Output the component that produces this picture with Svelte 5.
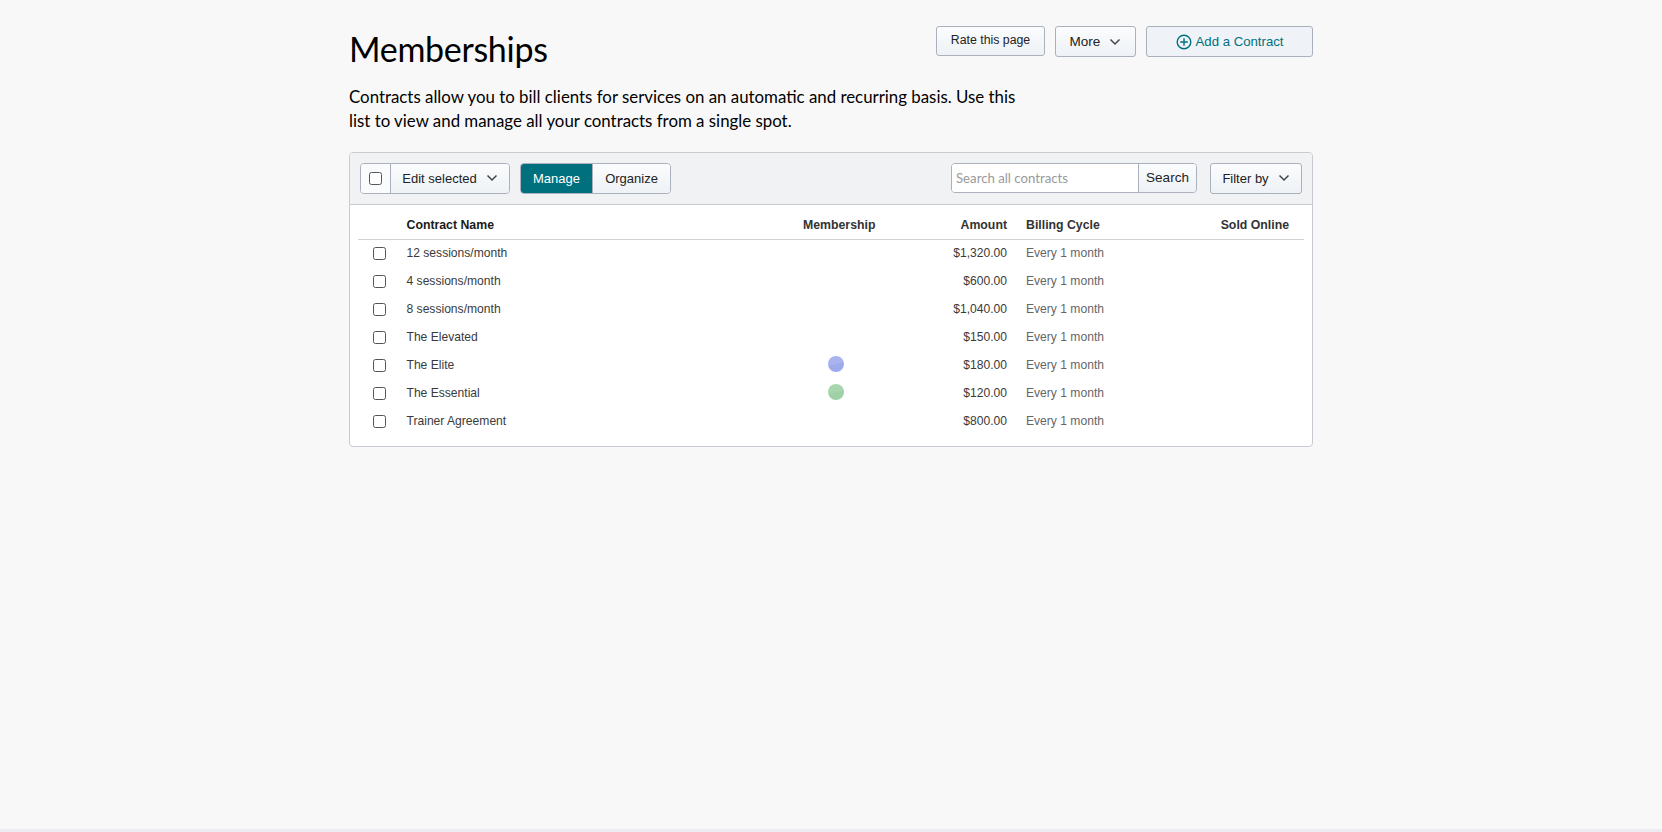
<script lang="ts">
	const contracts = [
		{ name: '12 sessions/month', amount: '$1,320.00', dot: null },
		{ name: '4 sessions/month', amount: '$600.00', dot: null },
		{ name: '8 sessions/month', amount: '$1,040.00', dot: null },
		{ name: 'The Elevated', amount: '$150.00', dot: null },
		{ name: 'The Elite', amount: '$180.00', dot: 'blue' },
		{ name: 'The Essential', amount: '$120.00', dot: 'green' },
		{ name: 'Trainer Agreement', amount: '$800.00', dot: null },
	];
</script>

{#snippet chevron()}
	<svg class="chevron" width="12" height="8" viewBox="0 0 12 8" fill="none" stroke="currentColor" stroke-width="1.5">
		<polyline points="1.5,1.5 6,6 10.5,1.5" />
	</svg>
{/snippet}

<div class="page">
	<main class="content">
		<header class="page-header">
			<div class="intro">
				<h1>Memberships</h1>
				<p>Contracts allow you to bill clients for services on an automatic and recurring basis. Use this list to view and manage all your contracts from a single spot.</p>
			</div>
			<div class="page-actions">
				<button class="btn btn-rate">Rate this page</button>
				<button class="btn btn-more">More {@render chevron()}</button>
				<button class="btn btn-add">
					<svg width="16" height="16" viewBox="0 0 16 16" fill="none" stroke="currentColor" stroke-width="1.4">
						<circle cx="8" cy="8" r="6.8" />
						<path d="M8 4.2v7.6M4.2 8h7.6" />
					</svg>
					Add a Contract
				</button>
			</div>
		</header>

		<section class="panel">
			<div class="toolbar">
				<div class="group group-edit">
					<span class="check-cell"><input type="checkbox" /></span>
					<button class="btn seg">Edit selected {@render chevron()}</button>
				</div>
				<div class="group group-view">
					<button class="btn seg seg-active">Manage</button>
					<button class="btn seg">Organize</button>
				</div>
				<div class="search">
					<input type="text" placeholder="Search all contracts" />
					<button class="btn seg">Search</button>
				</div>
				<button class="btn btn-filter">Filter by {@render chevron()}</button>
			</div>

			<table>
				<thead>
					<tr>
						<th class="col-check"></th>
						<th class="col-name">Contract Name</th>
						<th class="col-membership">Membership</th>
						<th class="col-amount">Amount</th>
						<th class="col-cycle">Billing Cycle</th>
						<th class="col-sold">Sold Online</th>
					</tr>
				</thead>
				<tbody>
					{#each contracts as c}
						<tr>
							<td class="col-check"><input type="checkbox" /></td>
							<td class="col-name">{c.name}</td>
							<td class="col-membership">
								{#if c.dot}<span class="dot dot-{c.dot}"></span>{/if}
							</td>
							<td class="col-amount">{c.amount}</td>
							<td class="col-cycle">Every 1 month</td>
							<td class="col-sold"></td>
						</tr>
					{/each}
				</tbody>
			</table>
		</section>
	</main>
	<div class="footer-strip"></div>
</div>

<style>
	:global(body) {
		background: #f8f8f8;
		font-family: "Liberation Sans", Arial, sans-serif;
		color: #333;
	}

	.page {
		min-height: 100vh;
		display: flex;
		flex-direction: column;
	}

	.content {
		width: 964px;
		margin: 0 auto;
		padding-top: 26px;
		flex: 1;
	}

	.footer-strip {
		height: 3px;
		background: #ebedf0;
	}

	/* Header */
	.page-header {
		display: flex;
		justify-content: space-between;
		align-items: flex-start;
		height: 126px;
	}

	.intro {
		width: 680px;
		flex-shrink: 0;
		margin-right: -100px;
	}

	h1 {
		font-family: Lato, sans-serif;
		font-size: 34px;
		font-weight: 400;
		letter-spacing: -0.3px;
		line-height: 46px;
		color: #000;
		margin: 0 0 13px;
	}

	.intro p {
		font-family: Lato, sans-serif;
		font-size: 16.85px;
		line-height: 24px;
		color: #000;
		margin: 0;
	}

	.page-actions {
		display: flex;
		gap: 10px;
		align-items: flex-start;
	}

	/* Buttons */
	.btn {
		font-family: "Liberation Sans", Arial, sans-serif;
		font-size: 13px;
		color: #222;
		height: 31px;
		padding: 0 12px;
		border: 1px solid #aab1bc;
		border-radius: 3px;
		background: linear-gradient(#fbfcfd, #eef2f6);
		display: inline-flex;
		align-items: center;
		justify-content: center;
		gap: 8px;
		box-sizing: border-box;
		white-space: nowrap;
	}

	.chevron { color: #444; margin-left: 1px; }

	.btn-rate { width: 109px; height: 30px; font-size: 12.3px; padding-bottom: 2px; }
	.btn-more { width: 81px; font-size: 13.5px; }

	.btn-add {
		width: 167px;
		background: #eff3f7;
		color: #00707f;
		font-size: 13.2px;
		gap: 4px;
	}

	/* Panel */
	.panel {
		border: 1px solid #c8ccd2;
		border-radius: 4px;
		background: #fff;
		height: 295px;
		box-sizing: border-box;
		overflow: hidden;
	}

	.toolbar {
		display: flex;
		align-items: flex-start;
		height: 52px;
		box-sizing: border-box;
		padding: 10px 10px 0;
		background: #f1f2f4;
		border-bottom: 1px solid #c8ccd2;
	}

	.group, .search {
		display: flex;
		border: 1px solid #aab1bc;
		border-radius: 4px;
		box-sizing: border-box;
		height: 31px;
		overflow: hidden;
	}

	.group .btn, .search .btn {
		border: none;
		border-radius: 0;
		height: 100%;
		padding-bottom: 1px;
	}

	.group-edit { width: 150px; }

	.check-cell {
		width: 29px;
		display: flex;
		align-items: center;
		justify-content: center;
		background: #fafbfc;
		border-right: 1px solid #aab1bc;
		flex-shrink: 0;
	}

	.group-edit .btn { flex: 1; padding-left: 0; padding-right: 0; }

	.group-view { margin-left: 10px; width: 151px; }
	.group-view .btn { padding-left: 0; padding-right: 0; }
	.group-view .btn:first-child { width: 71px; }
	.group-view .btn:last-child { flex: 1; border-left: 1px solid #aab1bc; }

	.seg-active {
		background: #00707f;
		color: #fff;
	}

	.search {
		margin-left: auto;
		width: 246px;
		height: 30px;
		background: #fff;
	}

	.search input {
		flex: 1;
		min-width: 0;
		border: none;
		outline: none;
		padding: 0 4px;
		font-family: Lato, sans-serif;
		font-size: 13.2px;
		background: #fff;
	}

	.search input::placeholder { color: #9a9a9a; opacity: 1; }

	.search .btn {
		width: 58px;
		flex-shrink: 0;
		padding-left: 0;
		padding-right: 0;
		font-size: 13.5px;
		border-left: 1px solid #aab1bc;
	}

	.btn-filter {
		width: 92px;
		margin-left: 13px;
		padding: 0 0 1px;
	}

	input[type="checkbox"] {
		appearance: none;
		width: 13px;
		height: 13px;
		margin: 0;
		border: 1px solid #555;
		border-radius: 2.5px;
		background: #fff;
		display: block;
	}

	/* Table */
	table {
		width: 946px;
		margin: 0 8px;
		border-collapse: collapse;
		table-layout: fixed;
		font-size: 12.1px;
	}

	th {
		height: 34px;
		padding: 7px 0 0;
		font-weight: 700;
		font-size: 12.3px;
		color: #333;
		text-align: left;
		border-bottom: 1px solid #cfd2d6;
		box-sizing: border-box;
		white-space: nowrap;
	}

	th.col-name { color: #1a1a1a; }

	td {
		height: 28px;
		padding: 0 0 1px;
		box-sizing: border-box;
		color: #3a3a3a;
	}

	.col-check { width: 48.5px; }
	.col-check input { margin: 1px 0 0 15px; }
	.col-name { width: 396.5px; }
	.col-membership { width: 119px; }
	.col-amount { width: 85px; text-align: right; }
	.col-cycle { padding-left: 19px; width: 160px; color: #666; }
	th.col-cycle { color: #333; }
	.col-sold { text-align: right; padding-right: 15px; }

	.dot {
		display: block;
		width: 16px;
		height: 16px;
		border-radius: 50%;
		margin: -2px 0 0 25px;
	}

	.dot-blue { background: linear-gradient(165deg, #a9b3ef 50%, #9dabec 50%); }
	.dot-green { background: linear-gradient(165deg, #a9d5ae 50%, #9fd0a6 50%); }
</style>
